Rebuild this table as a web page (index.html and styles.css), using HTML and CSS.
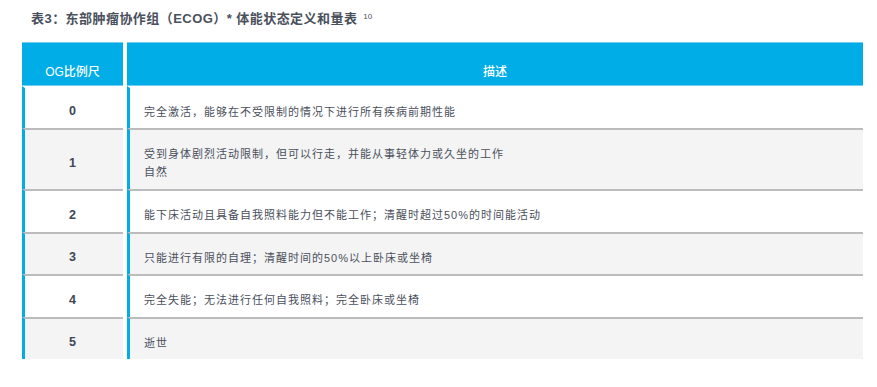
FILE: index.html
```html
<!DOCTYPE html>
<html lang="zh">
<head>
<meta charset="utf-8">
<link rel="stylesheet" href="styles.css">
</head>
<body>
<h1 class="title">表3：东部肿瘤协作组（ECOG）* 体能状态定义和量表<sup class="ref">10</sup></h1>
<div class="table">
  <div class="th">OG比例尺</div>
  <div class="th">描述</div>

  <div class="num">0</div>
  <div class="desc">完全激活，能够在不受限制的情况下进行所有疾病前期性能</div>

  <div class="num alt sep">1</div>
  <div class="desc alt sep">受到身体剧烈活动限制，但可以行走，并能从事轻体力或久坐的工作<br>自然</div>

  <div class="num sep">2</div>
  <div class="desc sep">能下床活动且具备自我照料能力但不能工作；清醒时超过50%的时间能活动</div>

  <div class="num alt sep">3</div>
  <div class="desc alt sep">只能进行有限的自理；清醒时间的50%以上卧床或坐椅</div>

  <div class="num sep">4</div>
  <div class="desc sep">完全失能；无法进行任何自我照料；完全卧床或坐椅</div>

  <div class="num alt sep">5</div>
  <div class="desc alt sep">逝世</div>
</div>
</body>
</html>
```
FILE: styles.css
```css
html, body {
  margin: 0;
  padding: 0;
  background: #ffffff;
}
body {
  font-family: "Liberation Sans", "Noto Sans CJK SC", sans-serif;
  color: #4a505c;
}
.title {
  margin: 10px 0 0 31px;
  font-size: 13px;
  line-height: 18px;
  font-weight: bold;
  letter-spacing: 0.45px;
  color: #4a505c;
}
.ref {
  font-size: 8px;
  font-weight: normal;
  letter-spacing: 0;
  margin-left: 6px;
  vertical-align: 4px;
  line-height: 0;
}
.table {
  margin: 14px 0 0 22px;
  display: grid;
  grid-template-columns: 101px 736px;
  grid-template-rows: 44px 42px 61px 43px 42px 43px 42px;
  column-gap: 4px;
}
.th {
  box-sizing: border-box;
  background: #00ade7;
  box-shadow: inset 0 1px 0 #72cef0, inset 0 -1px 0 #72cef0;
  color: #ffffff;
  font-size: 12px;
  font-weight: 500;
  display: flex;
  align-items: center;
  justify-content: center;
  padding-top: 12px;
}
.num, .desc {
  box-sizing: border-box;
  border-left: 3px solid #00ade7;
  border-top: 2px solid transparent;
  background: #ffffff;
}
.sep {
  border-top-color: #bcbcbc;
}
.alt {
  background: #f4f4f4;
}
.num {
  display: flex;
  align-items: center;
  justify-content: center;
  padding-top: 6px;
  font-size: 12.5px;
  font-weight: bold;
  color: #3e4656;
  padding-right: 3px;
}
.desc {
  padding: 15px 0 0 14px;
  font-size: 11px;
  line-height: 18px;
  letter-spacing: 1px;
  color: #4a505c;
}
```
